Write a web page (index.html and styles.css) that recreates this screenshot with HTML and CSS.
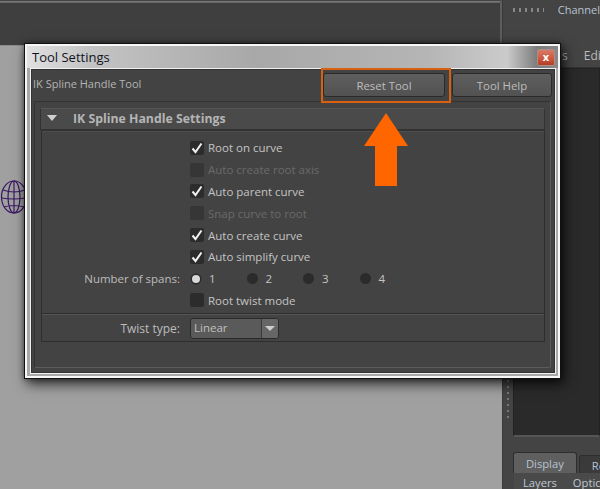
FILE: index.html
```html
<!DOCTYPE html>
<html lang="en">
<head>
<meta charset="utf-8">
<title>Tool Settings</title>
<link rel="stylesheet" href="styles.css">
</head>
<body>
<div class="desktop">
  <div class="left-col">
    <div class="top-bar"></div>
    <div class="viewport">
      <svg class="globe" width="26" height="36" viewBox="0 0 26 36" fill="none" stroke="#3a1763" stroke-width="1.2">
        <ellipse cx="14" cy="18" rx="12.5" ry="16"/>
        <ellipse cx="14" cy="18" rx="6" ry="16"/>
        <path d="M14 2v32M3 11q11 4 22 0M1.5 19q12 2 24 0M4 28q10-3 20 0"/>
      </svg>
    </div>
  </div>
  <div class="right-col">
    <div class="channel-row"><span class="grip"></span><span class="channel">Channel</span></div>
    <div class="menu-row"><span class="menu-s">s</span><span class="menu-e">Edi</span></div>
    <div class="dark-row">
      <div class="side-strip"><span class="strip-dots"></span></div>
      <div class="dark-pane"></div>
    </div>
    <div class="tabs">
      <span class="tab tab-on">Display</span>
      <span class="tab">Re</span>
    </div>
    <div class="sub-menu"><span>Layers</span><span>Optic</span></div>
  </div>

  <section class="dialog">
    <header class="titlebar">
      <span class="title">Tool Settings</span>
      <span class="close">x</span>
    </header>
    <div class="client">
      <div class="tool-row">
        <span class="tool-name">IK Spline Handle Tool</span>
        <div class="btn-wrap">
          <button class="btn btn-reset">Reset Tool</button>
          <button class="btn btn-help">Tool Help</button>
        </div>
      </div>
      <div class="frame">
        <div class="section-head"><span class="tri"></span><span class="section-title">IK Spline Handle Settings</span></div>
        <div class="section-body">
          <div class="rows">
            <div class="row"><span class="label"></span><span class="check"><svg viewBox="0 0 14 14" width="14" height="14"><path d="M2.5 7.5 5.5 11 11.5 2.5" /></svg></span><span class="opt">Root on curve</span></div>
            <div class="row dim"><span class="label"></span><span class="check"></span><span class="opt">Auto create root axis</span></div>
            <div class="row"><span class="label"></span><span class="check"><svg viewBox="0 0 14 14" width="14" height="14"><path d="M2.5 7.5 5.5 11 11.5 2.5" /></svg></span><span class="opt">Auto parent curve</span></div>
            <div class="row dim"><span class="label"></span><span class="check"></span><span class="opt">Snap curve to root</span></div>
            <div class="row"><span class="label"></span><span class="check"><svg viewBox="0 0 14 14" width="14" height="14"><path d="M2.5 7.5 5.5 11 11.5 2.5" /></svg></span><span class="opt">Auto create curve</span></div>
            <div class="row"><span class="label"></span><span class="check"><svg viewBox="0 0 14 14" width="14" height="14"><path d="M2.5 7.5 5.5 11 11.5 2.5" /></svg></span><span class="opt">Auto simplify curve</span></div>
            <div class="row">
              <span class="label">Number of spans:</span>
              <div class="radios">
                <span class="radio-item"><span class="radio radio-on"></span><span>1</span></span>
                <span class="radio-item"><span class="radio"></span><span>2</span></span>
                <span class="radio-item"><span class="radio"></span><span>3</span></span>
                <span class="radio-item"><span class="radio"></span><span>4</span></span>
              </div>
            </div>
            <div class="row"><span class="label"></span><span class="check"></span><span class="opt">Root twist mode</span></div>
          </div>
          <div class="twist-row">
            <span class="label">Twist type:</span>
            <div class="select"><span class="select-value">Linear</span><span class="select-arrow"></span></div>
          </div>
        </div>
      </div>
    </div>
  </section>

  <div class="highlight"></div>
  <svg class="arrow" width="44" height="73" viewBox="0 0 44 73"><path fill="#ff6600" d="M22 0 44 33H33V73H11V33H0Z"/></svg>
</div>
</body>
</html>
```

FILE: styles.css
```css
* { box-sizing: border-box; }
html, body { margin: 0; padding: 0; }
body { width: 600px; height: 489px; overflow: hidden; background: #a0a0a0; }
.desktop {
  position: relative; width: 600px; height: 489px; display: flex; overflow: hidden;
  font-family: "Open Sans", "Noto Sans", sans-serif; font-size: 11.5px; color: #c4c4c4;
}
.left-col { width: 502px; flex: none; display: flex; flex-direction: column; }
.top-bar {
  height: 45px; flex: none; background: #3f3f3f; border-top: 1px solid #444;
  box-shadow: inset 0 1px 0 #777, inset 0 2px 0 #666; border-right: 2px solid #5d5d5d;
}
.viewport { flex: 1; background: #a0a0a0; position: relative; border-top: 1px solid #8c8c8c; }
.globe { position: absolute; left: 0; top: 133px; }

.right-col { width: 98px; flex: none; background: #444; display: flex; flex-direction: column; border-left: 1px solid #3a3a3a; }
.channel-row { height: 24px; flex: none; padding-left: 10px; display: flex; align-items: flex-start; }
.grip {
  width: 32px; height: 4px; margin: 8px 14px 0 0;
  background: repeating-linear-gradient(90deg, #888 0 2px, transparent 2px 6px);
}
.channel { color: #b6c3d2; font-size: 11px; line-height: 20px; white-space: nowrap; }
.menu-row { height: 44px; flex: none; padding-top: 23px; border-bottom: 1px solid #333; color: #bbb; display: flex; font-size: 12px; line-height: 18px; }
.menu-s { margin-left: 59px; }
.menu-e { margin-left: 16px; white-space: nowrap; }
.dark-row { height: 369px; flex: none; display: flex; }
.side-strip { width: 10px; flex: none; position: relative; }
.strip-dots {
  position: absolute; left: 4px; top: 312px; width: 2px; height: 42px;
  background: repeating-linear-gradient(180deg, #777 0 2px, transparent 2px 6px);
}
.dark-pane { flex: 1; background: #2a2a2a; border: 1px solid #222; border-bottom: 2px solid #555; }
.tabs { height: 21px; flex: none; margin-top: 15px; padding-left: 10px; display: flex; align-items: flex-end; gap: 2px; }
.tab {
  height: 18px; padding: 0 12px; background: #3a3a3a; border: 1px solid #2d2d2d; border-bottom: 0;
  border-radius: 3px 3px 0 0; font-size: 11.2px; color: #b6c3d2; line-height: 20px; white-space: nowrap;
}
.tab-on { background: #5f5f5f; height: 21px; line-height: 21px; width: 64px; }
.sub-menu {
  flex: none; height: 16px; margin-left: 11px; display: flex; gap: 16px; padding: 3px 0 0 9px;
  font-size: 11.2px; line-height: 14px; color: #c0c8d2; background: #4a4a4a; white-space: nowrap;
}

.dialog {
  position: absolute; left: 24px; top: 43px; width: 537px; height: 336px;
  display: flex; flex-direction: column; background: #a8a8a8;
  border: 1px solid #111;
  box-shadow: inset 0 0 0 2px #f6f6f6, 3px 5px 12px rgba(0,0,0,.75), 0 0 5px rgba(0,0,0,.4);
}
.titlebar {
  height: 24px; flex: none; margin: 0 2px; border-top: 2px solid #f6f6f6; display: flex; align-items: center; justify-content: space-between;
  padding: 0 3px 0 5px;
  background: linear-gradient(90deg, #e0e0e0 0, #c4c4c4 60px, #a8a8a8 230px, #b5b5b5 400px, #cbcbcb 480px, #7c7c7c 510px, #8a8a8a 533px);
}
.title { color: #10131c; font-size: 13px; line-height: 18px; }
.close {
  width: 18px; height: 17px; border-radius: 2px; border: 1px solid #a89088; color: #fff; font-weight: 700; font-size: 11px;
  line-height: 14px; text-align: center;
  background: linear-gradient(#d67a68, #d05a40 55%, #b23c26);
}
.client {
  flex: 1; margin: 1px 5px 5px 6px; background: #434343; padding: 3px 2px 4px 1px;
  display: flex; flex-direction: column; min-height: 0;
  border: 1px solid #333; box-shadow: 0 0 0 1px #f0f0f0;
}
.tool-row { height: 28px; flex: none; display: flex; justify-content: space-between; align-items: flex-start; }
.tool-name { line-height: 21px; color: #b4b4b4; font-size: 11px; }
.btn-wrap { display: flex; gap: 7px; }
.btn {
  height: 24px; border: 1px solid #2a2a2a; border-radius: 3px; background: linear-gradient(#5e5e5e, #525252);
  color: #bdbdbd; font: 11.4px "Open Sans", "Noto Sans", sans-serif; padding: 0;
}
.btn-reset { width: 122px; }
.btn-help { width: 100px; }
.frame {
  flex: 1; margin: 0 1px; padding: 6px 5px 0 5px;
  border: 1px solid #333; border-bottom-color: #5c5c5c; border-right-color: #5c5c5c; border-radius: 2px;
}
.section-head {
  height: 22px; display: flex; align-items: center; background: #4a4a4a; border: 1px solid #333;
  border-top-color: #555; padding-left: 6px;
}
.tri { width: 0; height: 0; border: 5px solid transparent; border-top: 6px solid #d0d0d0; border-bottom: 0; margin-top: -3px; }
.section-title { margin-left: 16px; font-weight: 700; color: #b5b5b5; font-size: 12.3px; line-height: 18px; }
.section-body { margin: 0 0 0 1px; border: 1px solid #2e2e2e; height: 212px; border-top-color: #333; box-shadow: inset 0 1px 0 #4d4d4d; }
.rows { height: 183px; padding-top: 6px; border-bottom: 1px solid #2e2e2e; box-shadow: 0 1px 0 #555; }
.row { display: flex; align-items: center; height: 21.8px; }
.label { width: 138px; margin-right: 10px; text-align: right; flex: none; color: #bcbcbc; }
.check { width: 14px; height: 14px; background: #2c2c2c; border-radius: 2px; flex: none; }
.check svg { display: block; fill: none; stroke: #f0f0f0; stroke-width: 2; }
.opt { margin-left: 4px; color: #c4c4c4; }
.dim .opt { color: #6a6a6a; }
.dim .check { background: #363636; }
.radios { display: flex; width: 240px; }
.radio-item { width: 56.5px; display: flex; align-items: center; gap: 8px; }
.radio { width: 11px; height: 11px; border-radius: 50%; background: #2b2b2b; flex: none; }
.radio-on { background: #d8d8d8; box-shadow: 0 0 0 1.5px #2b2b2b; width: 8px; height: 8px; margin: 0 1.5px; }
.twist-row { height: 27px; padding-top: 1px; display: flex; align-items: center; }
.twist-row .label { font-size: 12px; }
.select {
  width: 89px; height: 21px; display: flex; border: 1px solid #2a2a2a; border-radius: 3px; background: #5a5a5a; overflow: hidden;
}
.select-value { flex: 1; padding-left: 3px; line-height: 18px; color: #c0c0c0; }
.select-arrow { width: 17px; background: #666; border-left: 1px solid #3a3a3a; position: relative; }
.select-arrow::after {
  content: ""; position: absolute; left: 3px; top: 7px; border: 5px solid transparent; border-top: 5px solid #ccc; border-bottom: 0;
}

.highlight { position: absolute; left: 321px; top: 68px; width: 130px; height: 35px; border: 2px solid #d9600f; }
.arrow { position: absolute; left: 364px; top: 113px; }
```
